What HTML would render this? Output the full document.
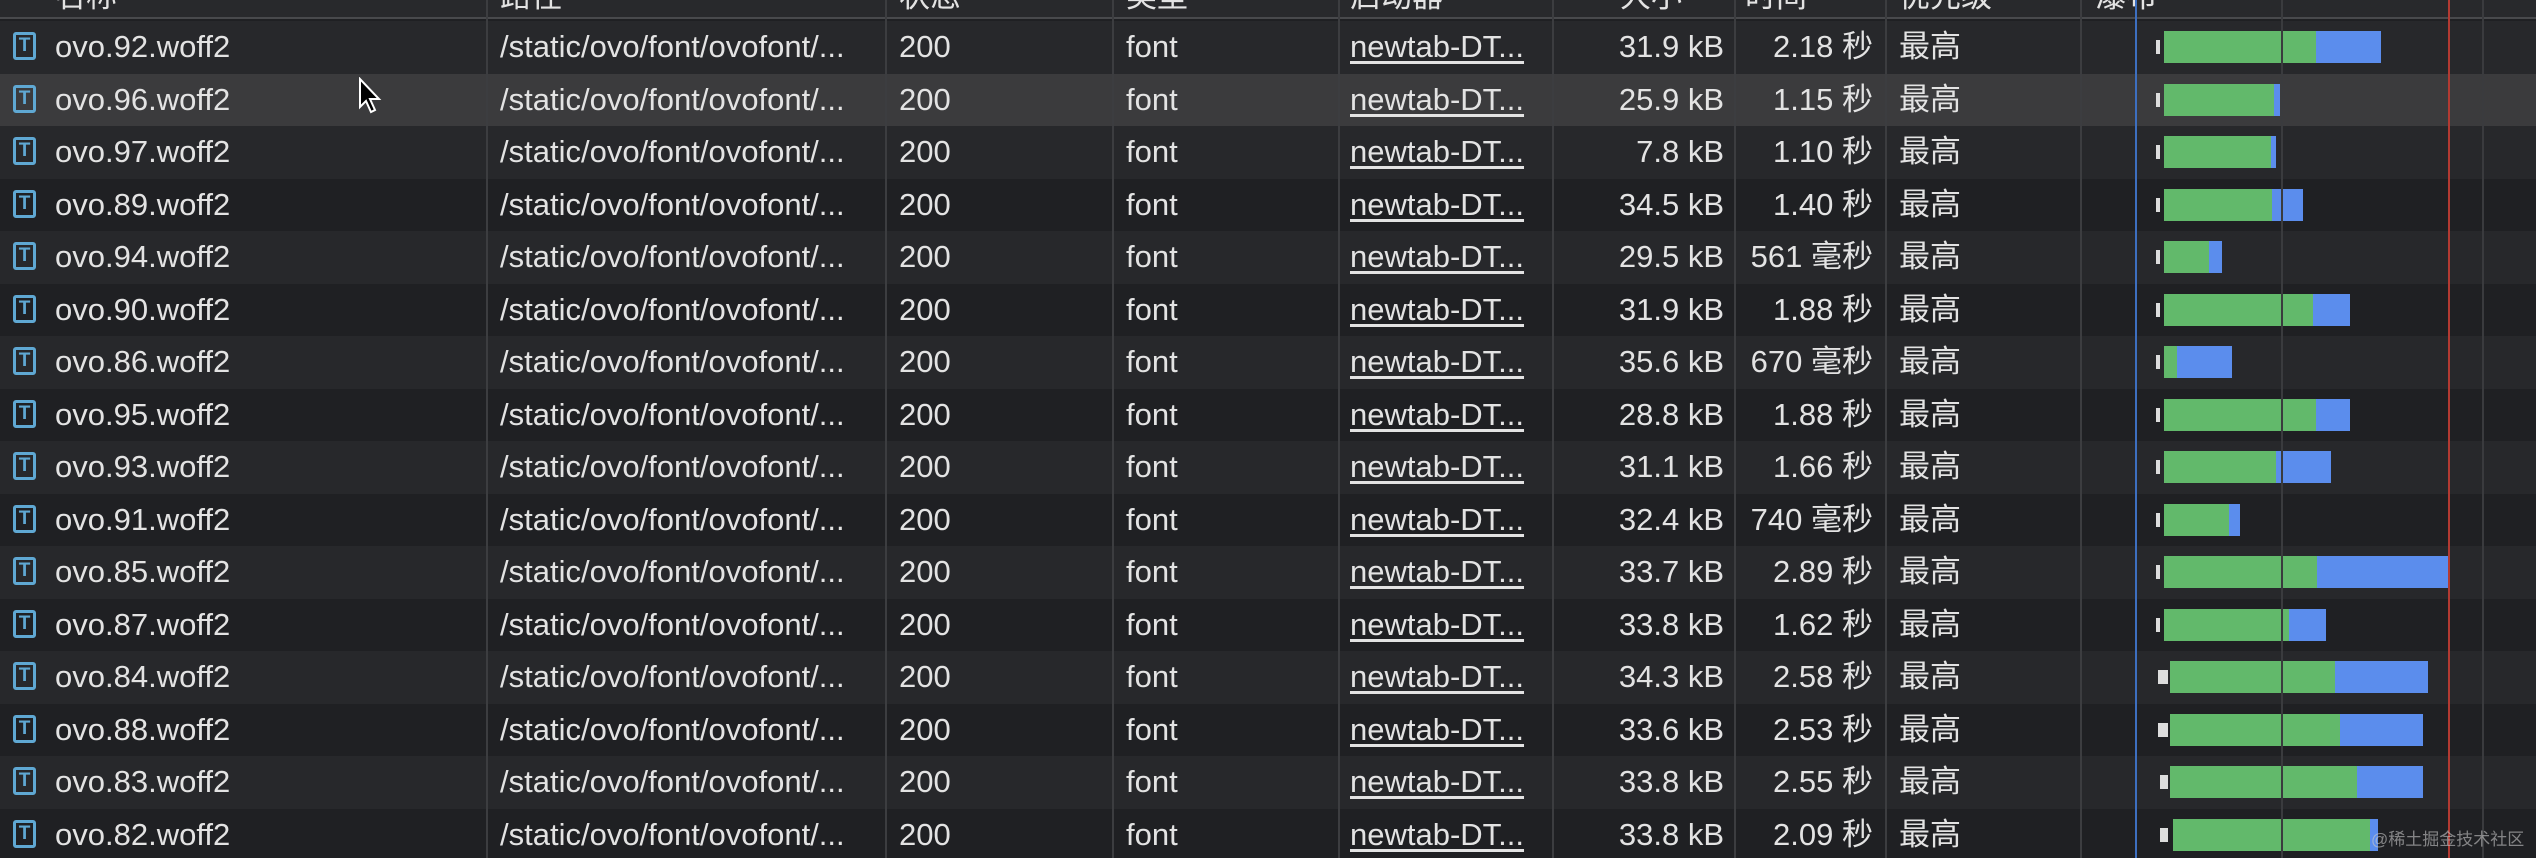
<!DOCTYPE html>
<html><head><meta charset="utf-8"><style>
*{margin:0;padding:0;box-sizing:border-box}
html,body{width:2536px;height:858px;overflow:hidden}
body{background:#1f2023;position:relative;font-family:"Liberation Sans","Noto Sans CJK SC",sans-serif;color:#e3e3e3;font-size:31px}
.hdr{position:absolute;left:0;top:0;width:2536px;height:19px;background:#28292c;border-bottom:2px solid #48494c;overflow:hidden}
.hdr span{position:absolute;top:-29px;font-size:31px;color:#e3e3e3}
.row{position:absolute;left:0;width:2536px;height:52.5px}
.row span{position:absolute;top:9px;line-height:34px;white-space:nowrap}
.e{background:#27282b}.o{background:#1f2023}.h{background:#3b3b3d}
.vl{position:absolute;top:0;height:858px;width:2px;background:#3c3d40}
.ic{position:absolute;left:13px;top:11px;width:23px;height:28px;border:3px solid #5fa8d3;border-radius:3px;color:#5fa8d3;font-size:19px;line-height:21px;text-align:center;font-weight:bold}
.n{left:55px}.p{left:500px}.s{left:899px}.t{left:1126px}.i{left:1350px;text-decoration:underline;text-underline-offset:4px}
.z{right:812px;text-align:right}.tm{right:663px;text-align:right}.pr{left:1899px}
.g{position:absolute;top:10px;height:32px;background:#62b96b}
.b{position:absolute;top:10px;height:32px;background:#5b8ded}
.k{position:absolute;top:19px;height:14px;background:#ddd}
</style></head><body>
<div class="hdr">
<span style="left:55px">名称</span><span style="left:500px">路径</span><span style="left:899px">状态</span><span style="left:1126px">类型</span><span style="left:1350px">启动器</span><span style="left:1620px">大小</span><span style="left:1745px">时间</span><span style="left:1899px">优先级</span><span style="left:2095px">瀑布</span>
</div>

<div class="row e" style="top:21px"><div class="ic">T</div><span class="n">ovo.92.woff2</span><span class="p">/static/ovo/font/ovofont/...</span><span class="s">200</span><span class="t">font</span><span class="i">newtab-DT...</span><span class="z">31.9 kB</span><span class="tm">2.18 秒</span><span class="pr">最高</span><div class="k" style="left:2156px;width:4px"></div><div class="g" style="left:2164px;width:152px"></div><div class="b" style="left:2316px;width:65px"></div></div>
<div class="row h" style="top:73.5px"><div class="ic">T</div><span class="n">ovo.96.woff2</span><span class="p">/static/ovo/font/ovofont/...</span><span class="s">200</span><span class="t">font</span><span class="i">newtab-DT...</span><span class="z">25.9 kB</span><span class="tm">1.15 秒</span><span class="pr">最高</span><div class="k" style="left:2156px;width:4px"></div><div class="g" style="left:2164px;width:110px"></div><div class="b" style="left:2274px;width:6px"></div></div>
<div class="row e" style="top:126px"><div class="ic">T</div><span class="n">ovo.97.woff2</span><span class="p">/static/ovo/font/ovofont/...</span><span class="s">200</span><span class="t">font</span><span class="i">newtab-DT...</span><span class="z">7.8 kB</span><span class="tm">1.10 秒</span><span class="pr">最高</span><div class="k" style="left:2156px;width:4px"></div><div class="g" style="left:2164px;width:107px"></div><div class="b" style="left:2271px;width:5px"></div></div>
<div class="row o" style="top:178.5px"><div class="ic">T</div><span class="n">ovo.89.woff2</span><span class="p">/static/ovo/font/ovofont/...</span><span class="s">200</span><span class="t">font</span><span class="i">newtab-DT...</span><span class="z">34.5 kB</span><span class="tm">1.40 秒</span><span class="pr">最高</span><div class="k" style="left:2156px;width:4px"></div><div class="g" style="left:2164px;width:108px"></div><div class="b" style="left:2272px;width:31px"></div></div>
<div class="row e" style="top:231px"><div class="ic">T</div><span class="n">ovo.94.woff2</span><span class="p">/static/ovo/font/ovofont/...</span><span class="s">200</span><span class="t">font</span><span class="i">newtab-DT...</span><span class="z">29.5 kB</span><span class="tm">561 毫秒</span><span class="pr">最高</span><div class="k" style="left:2156px;width:4px"></div><div class="g" style="left:2164px;width:45px"></div><div class="b" style="left:2209px;width:13px"></div></div>
<div class="row o" style="top:283.5px"><div class="ic">T</div><span class="n">ovo.90.woff2</span><span class="p">/static/ovo/font/ovofont/...</span><span class="s">200</span><span class="t">font</span><span class="i">newtab-DT...</span><span class="z">31.9 kB</span><span class="tm">1.88 秒</span><span class="pr">最高</span><div class="k" style="left:2156px;width:4px"></div><div class="g" style="left:2164px;width:149px"></div><div class="b" style="left:2313px;width:37px"></div></div>
<div class="row e" style="top:336px"><div class="ic">T</div><span class="n">ovo.86.woff2</span><span class="p">/static/ovo/font/ovofont/...</span><span class="s">200</span><span class="t">font</span><span class="i">newtab-DT...</span><span class="z">35.6 kB</span><span class="tm">670 毫秒</span><span class="pr">最高</span><div class="k" style="left:2156px;width:4px"></div><div class="g" style="left:2164px;width:13px"></div><div class="b" style="left:2177px;width:55px"></div></div>
<div class="row o" style="top:388.5px"><div class="ic">T</div><span class="n">ovo.95.woff2</span><span class="p">/static/ovo/font/ovofont/...</span><span class="s">200</span><span class="t">font</span><span class="i">newtab-DT...</span><span class="z">28.8 kB</span><span class="tm">1.88 秒</span><span class="pr">最高</span><div class="k" style="left:2156px;width:4px"></div><div class="g" style="left:2164px;width:152px"></div><div class="b" style="left:2316px;width:34px"></div></div>
<div class="row e" style="top:441px"><div class="ic">T</div><span class="n">ovo.93.woff2</span><span class="p">/static/ovo/font/ovofont/...</span><span class="s">200</span><span class="t">font</span><span class="i">newtab-DT...</span><span class="z">31.1 kB</span><span class="tm">1.66 秒</span><span class="pr">最高</span><div class="k" style="left:2156px;width:4px"></div><div class="g" style="left:2164px;width:112px"></div><div class="b" style="left:2276px;width:55px"></div></div>
<div class="row o" style="top:493.5px"><div class="ic">T</div><span class="n">ovo.91.woff2</span><span class="p">/static/ovo/font/ovofont/...</span><span class="s">200</span><span class="t">font</span><span class="i">newtab-DT...</span><span class="z">32.4 kB</span><span class="tm">740 毫秒</span><span class="pr">最高</span><div class="k" style="left:2156px;width:4px"></div><div class="g" style="left:2164px;width:65px"></div><div class="b" style="left:2229px;width:11px"></div></div>
<div class="row e" style="top:546px"><div class="ic">T</div><span class="n">ovo.85.woff2</span><span class="p">/static/ovo/font/ovofont/...</span><span class="s">200</span><span class="t">font</span><span class="i">newtab-DT...</span><span class="z">33.7 kB</span><span class="tm">2.89 秒</span><span class="pr">最高</span><div class="k" style="left:2156px;width:4px"></div><div class="g" style="left:2164px;width:153px"></div><div class="b" style="left:2317px;width:132px"></div></div>
<div class="row o" style="top:598.5px"><div class="ic">T</div><span class="n">ovo.87.woff2</span><span class="p">/static/ovo/font/ovofont/...</span><span class="s">200</span><span class="t">font</span><span class="i">newtab-DT...</span><span class="z">33.8 kB</span><span class="tm">1.62 秒</span><span class="pr">最高</span><div class="k" style="left:2156px;width:4px"></div><div class="g" style="left:2164px;width:125px"></div><div class="b" style="left:2289px;width:37px"></div></div>
<div class="row e" style="top:651px"><div class="ic">T</div><span class="n">ovo.84.woff2</span><span class="p">/static/ovo/font/ovofont/...</span><span class="s">200</span><span class="t">font</span><span class="i">newtab-DT...</span><span class="z">34.3 kB</span><span class="tm">2.58 秒</span><span class="pr">最高</span><div class="k" style="left:2158px;width:10px"></div><div class="g" style="left:2170px;width:165px"></div><div class="b" style="left:2335px;width:93px"></div></div>
<div class="row o" style="top:703.5px"><div class="ic">T</div><span class="n">ovo.88.woff2</span><span class="p">/static/ovo/font/ovofont/...</span><span class="s">200</span><span class="t">font</span><span class="i">newtab-DT...</span><span class="z">33.6 kB</span><span class="tm">2.53 秒</span><span class="pr">最高</span><div class="k" style="left:2158px;width:10px"></div><div class="g" style="left:2170px;width:170px"></div><div class="b" style="left:2340px;width:83px"></div></div>
<div class="row e" style="top:756px"><div class="ic">T</div><span class="n">ovo.83.woff2</span><span class="p">/static/ovo/font/ovofont/...</span><span class="s">200</span><span class="t">font</span><span class="i">newtab-DT...</span><span class="z">33.8 kB</span><span class="tm">2.55 秒</span><span class="pr">最高</span><div class="k" style="left:2160px;width:8px"></div><div class="g" style="left:2170px;width:187px"></div><div class="b" style="left:2357px;width:66px"></div></div>
<div class="row o" style="top:808.5px;height:60px"><div class="ic">T</div><span class="n">ovo.82.woff2</span><span class="p">/static/ovo/font/ovofont/...</span><span class="s">200</span><span class="t">font</span><span class="i">newtab-DT...</span><span class="z">33.8 kB</span><span class="tm">2.09 秒</span><span class="pr">最高</span><div class="k" style="left:2160px;width:8px"></div><div class="g" style="left:2173px;width:197px"></div><div class="b" style="left:2370px;width:8px"></div></div>

<div class="vl" style="left:486px"></div><div class="vl" style="left:885px"></div><div class="vl" style="left:1112px"></div><div class="vl" style="left:1338px"></div><div class="vl" style="left:1552px"></div><div class="vl" style="left:1734px"></div><div class="vl" style="left:1885px"></div><div class="vl" style="left:2080px"></div>
<div class="vl" style="left:2281px;background:#3a3b3e"></div>
<div class="vl" style="left:2482px;background:#3a3b3e"></div>
<div class="vl" style="left:2135px;background:#3d6fc0"></div>
<div class="vl" style="left:2448px;background:#b33a32"></div>

<svg style="position:absolute;left:358px;top:77px" width="24" height="38" viewBox="0 0 24 38"><path d="M2 2 L2 30 L8 24 L13 35 L17 33 L12 22 L21 22 Z" fill="#000" stroke="#fff" stroke-width="2"/></svg>

<div style="position:absolute;left:2371px;top:825px;font-size:17px;white-space:nowrap;color:rgba(200,200,200,0.6)">@稀土掘金技术社区</div>
</body></html>
